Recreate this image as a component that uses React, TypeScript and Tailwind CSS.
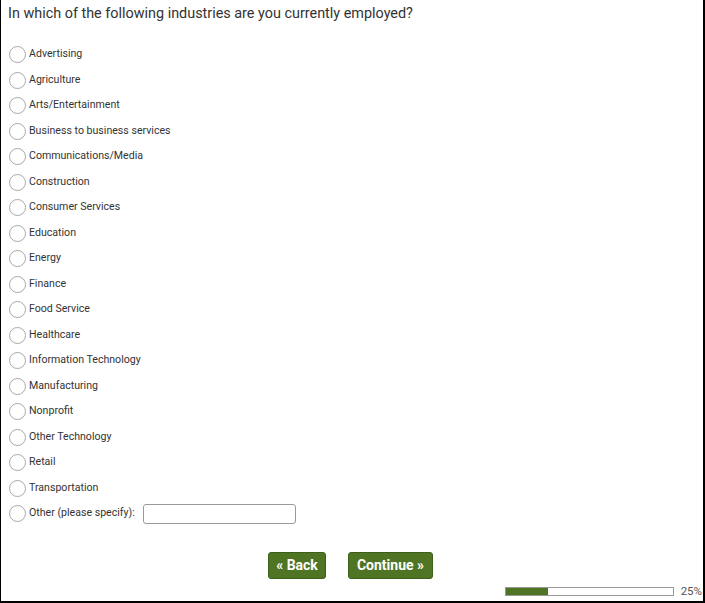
import React from "react";

const options = [
  "Advertising",
  "Agriculture",
  "Arts/Entertainment",
  "Business to business services",
  "Communications/Media",
  "Construction",
  "Consumer Services",
  "Education",
  "Energy",
  "Finance",
  "Food Service",
  "Healthcare",
  "Information Technology",
  "Manufacturing",
  "Nonprofit",
  "Other Technology",
  "Retail",
  "Transportation",
];

function Radio() {
  return (
    <span className="w-[17px] h-[17px] rounded-full border border-[#a8a8a8] bg-white shrink-0" />
  );
}

export default function App() {
  return (
    <div
      className="w-[705px] h-[603px] bg-white text-[#333] border-l border-r-2 border-b-2 border-black flex flex-col"
      style={{ fontFamily: "Roboto, 'Liberation Sans', sans-serif" }}
    >
      <div className="pl-[7px] pt-[4px] text-[14.4px] leading-[20px] text-[#333]">
        In which of the following industries are you currently employed?
      </div>
      <div className="mt-[18px] pl-[8px] flex flex-col">
        {options.map((o) => (
          <div key={o} className="h-[25.5px] flex items-center gap-[3px]">
            <Radio />
            <span className="text-[10.6px] leading-none text-[#333]">{o}</span>
          </div>
        ))}
        <div className="h-[25.5px] flex items-center gap-[3px]">
          <Radio />
          <span className="text-[10.6px] leading-none text-[#333]">Other (please specify):</span>
          <input
            type="text"
            className="ml-[5px] w-[153px] h-[20px] border border-[#999] rounded-[3px] bg-white"
          />
        </div>
      </div>
      <div className="mt-[25px] flex justify-center gap-[22px] pr-[3px]">
        <button className="w-[58px] h-[27px] bg-[#4f7524] border border-[#3e5e1c] rounded-[3px] text-white font-bold text-[14px]">
          « Back
        </button>
        <button className="w-[85px] h-[27px] bg-[#4f7524] border border-[#3e5e1c] rounded-[3px] text-white font-bold text-[14px]">
          Continue »
        </button>
      </div>
      <div className="mt-auto mb-[3px] flex items-center justify-end pr-[1px] gap-[7px]">
        <div className="w-[169px] h-[9px] border border-[#999] bg-white">
          <div className="h-full w-[42px] bg-[#4f7524]" />
        </div>
        <span className="text-[11.5px] leading-[13px] text-[#555]">25%</span>
      </div>
    </div>
  );
}
